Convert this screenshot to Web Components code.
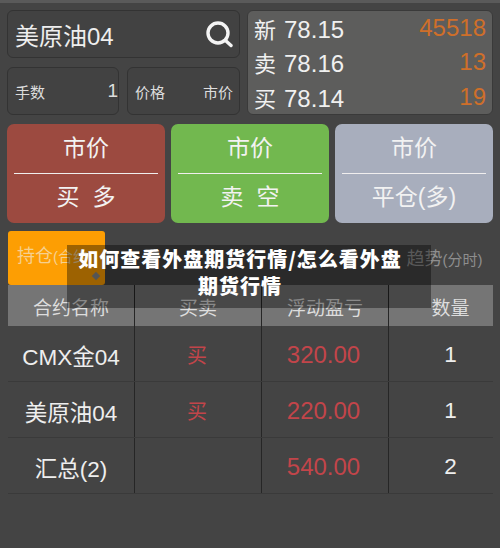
<!DOCTYPE html>
<html lang="zh">
<head>
<meta charset="utf-8">
<title>行情</title>
<style>
  html, body { margin: 0; height: 100%; background: #444; }
  body {
    font-family: "Liberation Sans", "Noto Sans CJK SC", sans-serif;
    color: #eee;
    overflow: hidden;
  }
</style>
</head>
<body>
<trade-screen></trade-screen>

<script>
class TradeField extends HTMLElement {
  constructor() {
    super()
    this.attachShadow({mode: 'open'}).innerHTML = `
      <style>
        :host {
          display: flex;
          align-items: center;
          justify-content: space-between;
          box-sizing: border-box;
          padding: 0 6px 0 7px;
          border: 1px solid #333;
          border-radius: 6px;
          background: #424242;
          font-size: 15px;
          color: #ddd;
        }
      </style>
      <slot></slot>
    `
  }
}
window.customElements.define('trade-field', TradeField)

class QuoteBox extends HTMLElement {
  constructor() {
    super()
    const rows = [['新', '78.15', '45518'], ['卖', '78.16', '13'], ['买', '78.14', '19']]
    this.attachShadow({mode: 'open'}).innerHTML = `
      <style>
        :host {
          display: flex;
          flex-direction: column;
          box-sizing: border-box;
          height: 105px;
          padding: 0 6px 0 6px;
          border: 1px solid #3a3a3a;
          border-radius: 6px;
          background: #5d5d5c;
        }
        .row { display: flex; justify-content: space-between; align-items: center; height: 35px; font-size: 24px; color: #f0f0f0; }
        .row:first-child { margin-top: -2px; }
        .kind { font-size: 22px; }
        .px { margin-left: 8px; }
        .vol { color: #cf6f2a; }
      </style>
      ${rows.map(r => `<div class="row"><span><span class="kind">${r[0]}</span><span class="px">${r[1]}</span></span><span class="vol">${r[2]}</span></div>`).join('')}
    `
  }
}
window.customElements.define('quote-box', QuoteBox)

class OrderButton extends HTMLElement {
  constructor() {
    super()
    this.attachShadow({mode: 'open'}).innerHTML = `
      <style>
        :host {
          display: flex;
          flex-direction: column;
          box-sizing: border-box;
          height: 99px;
          padding: 0 7px;
          border-radius: 7px;
          background: var(--bg);
          color: #f2f2f2;
          font-size: 23px;
          text-align: center;
        }
        .top { height: 49px; line-height: 48px; border-bottom: 1px solid #f0eeee; }
        .bottom { flex: 1; line-height: 47px; white-space: pre; }
      </style>
      <div class="top">${this.getAttribute('price')}</div>
      <div class="bottom"><slot></slot></div>
    `
  }
}
window.customElements.define('order-button', OrderButton)

class PositionTable extends HTMLElement {
  constructor() {
    super()
    const rows = [
      ['CMX金04', '买', '320.00', '1'],
      ['美原油04', '买', '220.00', '1'],
      ['汇总(2)', '', '540.00', '2']
    ]
    this.attachShadow({mode: 'open'}).innerHTML = `
      <style>
        :host { display: block; }
        .row { display: grid; grid-template-columns: 126px 127px 127px 104px; height: 56px; box-sizing: border-box; border-bottom: 1px solid #3a3a3a; }
        .row > div { display: flex; align-items: center; justify-content: center; padding-top: 2px; font-size: 22.500px; color: #eee; }
        .row > div + div { border-left: 1px solid #262626; }
        .head { height: 41px; background: #757575; border-bottom: 0; }
        .head > div { padding-top: 1px; font-size: 19px; color: #ddd; }
        .row .red { color: #c2454a; font-size: 24px; padding-right: 3px; }
        .row .side { color: #c2454a; font-size: 20px; padding-right: 2px; }
        .row .qty { padding-left: 20px; }
      </style>
      <div class="row head">
        <div>合约名称</div><div>买卖</div><div>浮动盈亏</div><div class="qty">数量</div>
      </div>
      ${rows.map(r => `<div class="row"><div>${r[0]}</div><div class="side">${r[1]}</div><div class="red">${r[2]}</div><div class="qty">${r[3]}</div></div>`).join('')}
    `
  }
}
window.customElements.define('position-table', PositionTable)

class TabBar extends HTMLElement {
  constructor() {
    super()
    this.attachShadow({mode: 'open'}).innerHTML = `
      <style>
        :host { display: grid; grid-template-columns: repeat(5, 97px); height: 54px; align-items: center; font-size: 18px; color: #8e8e8e; }
        small { font-size: 15px; }
        .tab { white-space: nowrap; padding-bottom: 3px; }
        .on {
          position: relative;
          box-sizing: border-box;
          height: 54px;
          line-height: 50px;
          padding: 0 0 0 9px;
          background: #fd9e03;
          border-radius: 3px;
          color: #f6d08f;
          overflow: hidden;
        }
        .on::after {
          content: "";
          position: absolute;
          left: 85px;
          top: 42px;
          width: 6px;
          height: 6px;
          background: #8a8a8a;
          transform: rotate(45deg);
        }
        .last { grid-column: 5; text-align: center; }
      </style>
      <div class="tab on">持仓<small>(合约)</small></div>
      <div class="tab last">趋势<small>(分时)</small></div>
    `
  }
}
window.customElements.define('tab-bar', TabBar)

class TitleBanner extends HTMLElement {
  constructor() {
    super()
    this.attachShadow({mode: 'open'}).innerHTML = `
      <style>
        :host {
          position: absolute;
          left: 67px;
          top: 242px;
          box-sizing: border-box;
          width: 364px;
          height: 63px;
          padding: 0 23px 0 5px;
          background: rgba(0, 0, 0, .38);
          color: #fff;
          font: 900 20px/27px "Noto Sans CJK SC", sans-serif;
          letter-spacing: 1px;
          text-align: center;
        }
      </style>
      <slot></slot>
    `
  }
}
window.customElements.define('title-banner', TitleBanner)

class TradeScreen extends HTMLElement {
  constructor() {
    super()
    this.attachShadow({mode: 'open'}).innerHTML = `
      <style>
        :host {
          display: block;
          position: relative;
          width: 500px;
          height: 548px;
          overflow: hidden;
          background: #444;
          border-top: 3px solid #5a5a5a;
          box-sizing: border-box;
        }
        .wrap { display: flex; flex-direction: column; padding: 7px 7px 0 7px; }
        .top { display: grid; grid-template-columns: 233px 246px; gap: 7px; }
        .left { display: grid; grid-template-rows: 48px 48px; gap: 9px; }
        .name { font-size: 24px; color: #eee; }
        .pair { display: grid; grid-template-columns: 112px 113px; gap: 8px; }
        .actions { display: grid; grid-template-columns: repeat(3, 158px); gap: 6px; margin-top: 9px; }
        tab-bar { margin: 8px 0 0 1px; }
        position-table { margin-left: 1px; }
        svg { width: 27px; height: 27px; display: block; }
      </style>
      <div class="wrap">
        <div class="top">
          <div class="left">
            <trade-field class="name">
              <span>美原油04</span>
              <svg viewBox="0 0 27 27" fill="none" stroke="#f4f4f4"><circle cx="12" cy="12" r="10" stroke-width="3.400"/><path d="M19.500 19.500l5.500 5" stroke-width="3.400" stroke-linecap="round"/></svg>
            </trade-field>
            <div class="pair">
              <trade-field style="padding-right:0"><span>手数</span><span style="font-size:19px">1</span></trade-field>
              <trade-field><span>价格</span><span>市价</span></trade-field>
            </div>
          </div>
          <quote-box></quote-box>
        </div>
        <div class="actions">
          <order-button price="市价" style="--bg:#9c4a40">买  多</order-button>
          <order-button price="市价" style="--bg:#72b84f">卖  空</order-button>
          <order-button price="市价" style="--bg:#a8aebd">平仓(多)</order-button>
        </div>
        <tab-bar></tab-bar>
        <position-table></position-table>
      </div>
      <title-banner>如何查看外盘期货行情/怎么看外盘期货行情</title-banner>
    `
  }
}
window.customElements.define('trade-screen', TradeScreen)
</script>
</body>
</html>
